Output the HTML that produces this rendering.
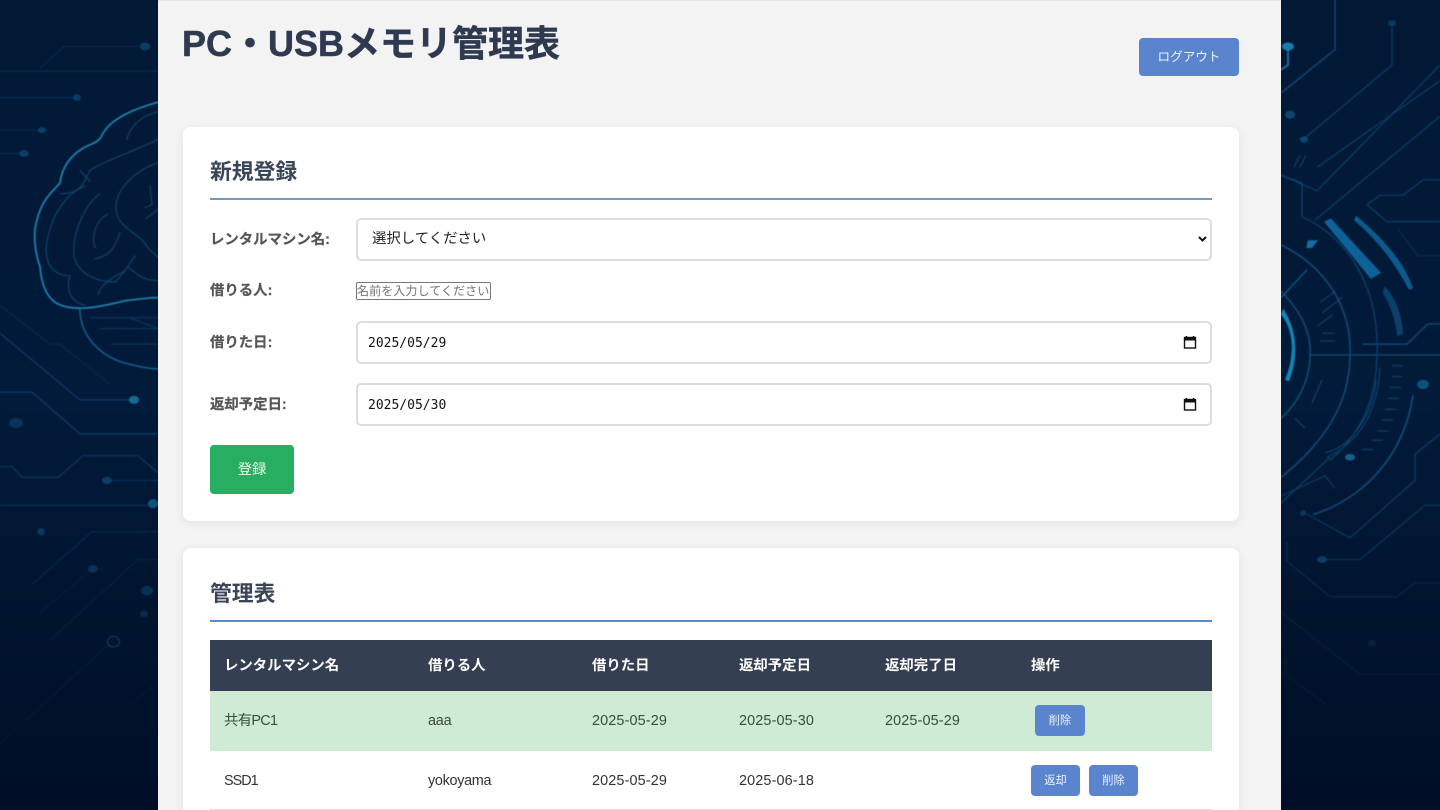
<!DOCTYPE html>
<html lang="ja"><head><meta charset="utf-8"><title>PC・USBメモリ管理表</title>
<style>
html,body{margin:0;padding:0;width:1440px;height:810px;overflow:hidden;background:#011833}
body{position:relative;font-family:"Liberation Sans","Noto Sans CJK JP",sans-serif;color:#333}
.bg{position:absolute;left:0;top:0;filter:blur(.5px)}
.bg path,.bg ellipse.r{vector-effect:non-scaling-stroke}
.a{position:absolute;box-sizing:border-box}
.t{position:absolute;white-space:nowrap;line-height:20px;font-size:14.4px}
.panel{left:158px;top:0;width:1123px;height:810px;background:#f3f3f3;border-top:1px solid #e6e6e6}
.card{left:183px;width:1056px;background:#fff;border-radius:8px;box-shadow:0 2px 10px rgba(0,0,0,.07)}
.box{left:356px;width:856px;height:43px;background:#fff;border:2px solid #ddd;border-radius:5px}
.lb{left:210px;font-weight:700;color:#555}
.mono{left:368px;font-family:"DejaVu Sans Mono",monospace;font-size:13px;color:#111}
.btn{background:#5b84cf;border-radius:4px;color:#eef3fb;text-align:center;font-size:11.2px}
.td{color:#3a4a3e;letter-spacing:.14px}
.th{color:#fff;font-weight:700}
h1,h2{margin:0;font-weight:700}
</style></head><body>
<svg class="bg" width="1440" height="810" viewBox="0 0 1440 810" xmlns="http://www.w3.org/2000/svg">
<defs><linearGradient id="g" x1="0" y1="0" x2="0" y2="1"><stop offset="0" stop-color="#021936"/><stop offset=".5" stop-color="#021b3a"/><stop offset="1" stop-color="#000f27"/></linearGradient>
<linearGradient id="f" x1="0" y1="0" x2="0" y2="1"><stop offset="0" stop-color="#011630" stop-opacity="0"/><stop offset="1" stop-color="#000f27" stop-opacity=".85"/></linearGradient></defs>
<rect width="1440" height="810" fill="url(#g)"/>
<g transform="scale(1 1.55)">
<g fill="none" stroke="#0b3a66" stroke-width="1.2" opacity=".72">
<path d="M40 44L64 30H145" stroke="#082e54"/><path d="M0 46H158" stroke="#0a3660"/><path d="M0 63H77"/><path d="M0 84H42" stroke="#082e54"/><path d="M0 99H25"/>
<path d="M0 197L50 222H60L110 248" stroke="#082e54"/><path d="M0 215L80 258H133" stroke="#0f4a7a"/><path d="M0 253H32L80 280H158" stroke="#0f4a7a"/>
<path d="M0 301H12L22 308H58L83 294H138L158 305" stroke="#0f4573"/><path d="M102 310H158"/><path d="M0 326H158" stroke="#0f4573"/>
<path d="M32 377L92 343H158" stroke="#0a3560"/><path d="M50 413L138 361H158" stroke="#082e54"/><path d="M0 480L108 416" stroke="#082c50"/><path d="M93 367L40 395" stroke="#07274a"/><path d="M120 460L158 440" stroke="#07264a"/>
</g>
<g fill="#0d4672" opacity=".8">
<ellipse cx="145" cy="30" rx="5" ry="2.600"/><ellipse cx="77" cy="63" rx="4" ry="2.200"/><ellipse cx="42" cy="84" rx="4" ry="2"/><ellipse cx="24" cy="99" rx="5" ry="2.200"/>
<ellipse cx="134" cy="258" rx="5" ry="2.600" fill="#1a7fae"/><ellipse cx="16" cy="273" rx="7" ry="3.200" fill="#0b3a62"/><ellipse cx="107" cy="310" rx="5" ry="2.400"/><ellipse cx="153" cy="325" rx="5" ry="3" fill="#14668f"/>
<ellipse cx="41" cy="343" rx="4" ry="2.400"/><ellipse cx="93" cy="367" rx="5" ry="2.400"/><ellipse cx="147" cy="381" rx="6" ry="3"/><ellipse cx="144" cy="396" rx="4" ry="2"/>
</g>
<ellipse class="r" cx="113.500" cy="414" rx="6" ry="3.500" fill="none" stroke="#1a4f7c" stroke-width="1.300"/>
<g fill="none" stroke-linecap="round">
<path d="M158 66C135 70 112 76 103 86C98 93 92 92 82 96C70 101 62 108 60 118C55 122 42 128 37 142C32 152 36 165 40 172C41 180 44 190 55 195C72 202 100 198 125 194C138 193 150 192 158 192" stroke="#1f7eae" stroke-width="1.800"/>
<path d="M80 200C80 216 100 231 130 235C142 237 150 238 158 238" stroke="#145f92" stroke-width="1.500"/>
<g stroke="#14527f" stroke-width="1" opacity=".85">
<path d="M60 125C80 125 82 120 90 110C100 105 125 100 158 90"/><path d="M80 110L90 117"/><path d="M158 105C135 110 115 122 116 135C118 148 140 150 148 160L158 166"/>
<path d="M100 125C85 132 72 150 74 165C78 178 100 182 115 182C122 178 130 170 135 165"/><path d="M85 120C65 125 50 140 46 160C46 175 60 178 70 178"/><path d="M108 138C95 142 90 155 96 160"/><path d="M120 150C115 160 110 165 95 167"/><path d="M98 190C102 182 115 178 125 175"/><path d="M128 172C140 180 150 181 158 181"/><path d="M70 178C65 188 72 195 85 197"/>
<path d="M158 72C145 74 130 80 127 90"/><path d="M150 120L152 132L145 134"/><path d="M158 135L146 141"/>
<path d="M90 205H158M100 212H158M112 222H158M130 205L158 212" stroke="#0e3f68"/>
</g></g>
<!-- right side -->
<g fill="none" stroke="#0e4877" stroke-width="1.200" opacity=".8">
<path d="M1281 60L1335 32V0" stroke="#11609a"/><path d="M1288 32V42L1281 45" stroke="#1880b4" stroke-width="2"/>
<path d="M1303 90L1392 42V15"/><path d="M1281 113L1317 123L1440 42"/><path d="M1317 108L1440 52"/><path d="M1315 142L1440 75"/>
<path d="M1367 132L1380 126H1403L1423 116H1440L1440 116"/><path d="M1367 132L1387 143H1440"/><path d="M1398 148L1418 165H1440" stroke="#0a3358"/>
<path d="M1310 229H1440" stroke="#135e92"/><path d="M1363 222H1407L1428 209H1440" stroke="#135e92"/>
<path d="M1281 113L1302 118V140C1340 150 1380 180 1377 229C1376 260 1360 280 1330 297" stroke="#0e4f80"/>
<path d="M1281 158C1320 170 1352 195 1350 229C1350 260 1325 285 1281 308" stroke="#125a8c" stroke-width="1.500"/>
<path d="M1281 188C1300 200 1312 215 1310 229C1310 245 1298 260 1281 270" stroke="#125a8c" stroke-width="1.500"/>
<path d="M1281 192L1307 174" stroke="#12608f" stroke-width="1.500"/>
<path d="M1330 295L1280 325M1376 245C1375 265 1350 290 1325 292" stroke="#0e4a78"/>
<path d="M1380 237C1378 265 1360 285 1327 295" stroke="#0e4a78"/>
<path d="M1413 255C1405 290 1370 320 1313 332" stroke="#135f94" stroke-width="1.500"/>
<path d="M1302 330L1350 347L1415 310V293L1440 280"/><path d="M1320 361H1360L1425 326H1440"/><path d="M1287 350V362L1330 385H1397L1415 376H1440" stroke="#0b3a62"/>
<path d="M1281 320L1325 307L1335 315" stroke="#0d4570"/>
<path d="M1281 395L1360 435H1440" stroke="#082c4e"/><path d="M1285 425V435L1327 455" stroke="#082c4e"/>
</g>
<g stroke="#1a6c9c" stroke-width="1" opacity=".55">
<path d="M1320 195L1335 188M1322 202L1342 192M1318 210L1333 203M1322 215H1335M1320 220H1335"/>
<path d="M1392 236H1403M1392 243H1402M1390 250H1401M1388 257H1399M1385 264H1396M1382 271H1393M1377 278H1388M1372 284H1383M1362 290H1373"/>
<path d="M1300 100L1294 108M1306 100L1300 108"/><path d="M1322 245L1312 260M1295 270L1305 276"/>
</g>
<path d="M1324 143L1331 141L1381 176L1371 180Z" fill="#0d6299"/>
<path d="M1356 139C1385 155 1405 170 1413 186L1409 187C1395 170 1378 155 1354 142Z" fill="#0c5b8f"/>
<path d="M1385 186C1395 192 1401 205 1402 215L1398 216C1396 205 1390 195 1384 189Z" fill="#0b3f6c" stroke="#0b3f6c" stroke-width="2"/>
<path d="M1281 203C1293 212 1296 228 1285 245L1289 246C1299 230 1297 212 1283 199Z" fill="#1284b8"/>
<path d="M1308 155H1318L1312 160H1306Z" fill="#1a6a9e"/>
<g fill="#114e7c" opacity=".85">
<ellipse cx="1288" cy="30" rx="6" ry="2.600" fill="#1f8cc0"/><ellipse cx="1290" cy="74" rx="5" ry="2.600"/><ellipse cx="1304" cy="90" rx="4" ry="2"/><ellipse cx="1392" cy="15" rx="4" ry="2" fill="#0c3d66"/>
<ellipse cx="1423" cy="248" rx="6" ry="3" fill="#115a8a"/><ellipse cx="1350" cy="295" rx="5" ry="2.200" fill="#1a6c9c"/><ellipse cx="1303" cy="331" rx="3" ry="2" fill="#0c3d66"/><ellipse cx="1322" cy="361" rx="5" ry="2.200"/><ellipse cx="1372" cy="415" rx="4" ry="2" fill="#0a3358"/>
</g>
</g>
<rect y="480" width="1440" height="330" fill="url(#f)"/>
</svg>

<div class="a panel"></div>
<h1 class="t" style="left:182px;top:24px;line-height:40px;font-size:36px;color:#2f3a50;-webkit-text-stroke:.5px #2f3a50">PC・USBメモリ管理表</h1>
<div class="a btn t" style="left:1139px;top:38px;width:100px;height:38px;line-height:38px;font-size:12.600px">ログアウト</div>

<div class="a card" style="top:127px;height:394px"></div>
<h2 class="t" style="left:210px;top:157px;line-height:30px;font-size:21.800px;color:#3a4558">新規登録</h2>
<div class="a" style="left:210px;top:198px;width:1002px;height:2px;background:#6c9ac4"></div>

<div class="t lb" style="top:230px;-webkit-text-stroke:.2px #555">レンタルマシン名:</div>
<div class="a box" style="top:218px"></div>
<div class="t" style="left:372px;top:229px;color:#222">選択してください</div>
<svg class="a" style="left:1197px;top:235px" width="11" height="8" viewBox="0 0 11 8"><path d="M2 2L5.500 5.500L9 2" fill="none" stroke="#111" stroke-width="2"/></svg>

<div class="t lb" style="top:281px;-webkit-text-stroke:.2px #555">借りる人:</div>
<div class="a" style="left:356px;top:282px;width:135px;height:18px;border:1px solid #767676;border-radius:2px;background:#fff"></div>
<div class="t" style="left:357px;top:281px;font-size:12.100px;color:#757575">名前を入力してください</div>

<div class="t lb" style="top:333px;-webkit-text-stroke:.2px #555">借りた日:</div>
<div class="a box" style="top:321px"></div>
<div class="t mono" style="top:332px;margin-top:2px">2025/05/29</div>
<svg class="a" style="left:1183px;top:335px" width="14" height="15" viewBox="0 0 14 15"><path d="M3.500 1V3M10.500 1V3" stroke="#111" stroke-width="1.500"/><rect x="1.500" y="2.500" width="11" height="10.500" fill="none" stroke="#111" stroke-width="1.400"/><rect x="1.500" y="2.500" width="11" height="3" fill="#111"/></svg>

<div class="t lb" style="top:395px;-webkit-text-stroke:.2px #555">返却予定日:</div>
<div class="a box" style="top:383px"></div>
<div class="t mono" style="top:394px;margin-top:2px">2025/05/30</div>
<svg class="a" style="left:1183px;top:397px" width="14" height="15" viewBox="0 0 14 15"><path d="M3.500 1V3M10.500 1V3" stroke="#111" stroke-width="1.500"/><rect x="1.500" y="2.500" width="11" height="10.500" fill="none" stroke="#111" stroke-width="1.400"/><rect x="1.500" y="2.500" width="11" height="3" fill="#111"/></svg>

<div class="a t" style="left:210px;top:445px;width:84px;height:49px;line-height:50px;background:#27ae60;border-radius:4px;color:#eafaf0;text-align:center">登録</div>

<div class="a card" style="top:548px;height:280px"></div>
<h2 class="t" style="left:210px;top:579px;line-height:30px;font-size:21.800px;color:#3a4558">管理表</h2>
<div class="a" style="left:210px;top:620px;width:1002px;height:2px;background:#5b88d2"></div>

<div class="a" style="left:210px;top:640px;width:1002px;height:51px;background:#343f51"></div>
<div class="a" style="left:210px;top:691px;width:1002px;height:60px;background:#cfead5"></div>
<div class="a" style="left:210px;top:809px;width:1002px;height:1px;background:#ddd"></div>

<div class="t th" style="left:224px;top:656px">レンタルマシン名</div>
<div class="t th" style="left:428px;top:656px">借りる人</div>
<div class="t th" style="left:592px;top:656px">借りた日</div>
<div class="t th" style="left:739px;top:656px">返却予定日</div>
<div class="t th" style="left:885px;top:656px">返却完了日</div>
<div class="t th" style="left:1031px;top:656px">操作</div>

<div class="t td" style="left:224px;top:711px;letter-spacing:-.7px">共有PC1</div>
<div class="t td" style="left:428px;top:711px;letter-spacing:-.2px">aaa</div>
<div class="t td" style="left:592px;top:711px">2025-05-29</div>
<div class="t td" style="left:739px;top:711px">2025-05-30</div>
<div class="t td" style="left:885px;top:711px">2025-05-29</div>
<div class="a t btn" style="left:1035px;top:705px;width:50px;height:31px;line-height:32px">削除</div>

<div class="t td" style="left:224px;top:771px;color:#333;letter-spacing:-1px">SSD1</div>
<div class="t td" style="left:428px;top:771px;color:#333;letter-spacing:-.3px">yokoyama</div>
<div class="t td" style="left:592px;top:771px;color:#333">2025-05-29</div>
<div class="t td" style="left:739px;top:771px;color:#333">2025-06-18</div>
<div class="a t btn" style="left:1031px;top:765px;width:49px;height:31px;line-height:32px">返却</div>
<div class="a t btn" style="left:1089px;top:765px;width:49px;height:31px;line-height:32px">削除</div>
</body></html>
